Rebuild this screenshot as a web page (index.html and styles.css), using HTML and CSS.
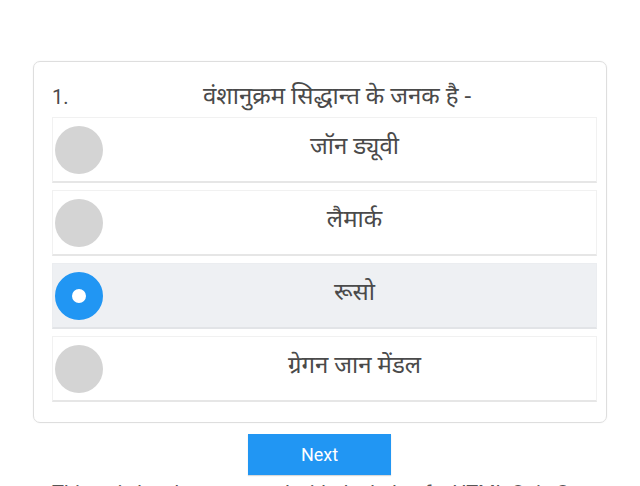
FILE: index.html
```html
<!DOCTYPE html>
<html lang="hi">
<head>
<meta charset="utf-8">
<title>Quiz</title>
<link rel="stylesheet" href="styles.css">
</head>
<body>
<div class="card">
  <div class="question">
    <span class="qnum">1.</span>
    <span class="qtext">वंशानुक्रम सिद्धान्त के जनक है -</span>
  </div>
  <div class="options">
    <label class="option">
      <span class="radio"></span>
      <span class="otext">जॉन ड्यूवी</span>
    </label>
    <label class="option">
      <span class="radio"></span>
      <span class="otext">लैमार्क</span>
    </label>
    <label class="option selected">
      <span class="radio checked"></span>
      <span class="otext">रूसो</span>
    </label>
    <label class="option">
      <span class="radio"></span>
      <span class="otext">ग्रेगन जान मेंडल</span>
    </label>
  </div>
</div>
<div class="actions">
  <button class="next">Next</button>
</div>
<p class="footer">This quiz has been created with the help of a HTML Quiz Generator</p>
</body>
</html>
```
FILE: styles.css
```css
html, body {
  margin: 0;
  padding: 0;
  background: #ffffff;
  font-family: Roboto, "Noto Sans", "Liberation Sans", sans-serif;
  color: #444;
  overflow: hidden;
}

.card {
  box-sizing: border-box;
  width: 574px;
  height: 362px;
  margin: 61px 0 0 33px;
  border: 1px solid #dedede;
  border-radius: 7px;
  padding: 0 9px 0 18px;
  box-shadow: 0 0 2px rgba(0,0,0,0.05);
}

.question {
  display: flex;
  align-items: center;
  height: 55px;
  font-size: 20px;
  color: #4a4a4a;
}

.qnum {
  width: 150px;
  padding-top: 14px;
}

.qtext {
  font-size: 24px;
  padding-top: 10px;
  padding-left: 1px;
}

.options {
  display: flex;
  flex-direction: column;
  gap: 7px;
}

.option {
  box-sizing: border-box;
  height: 66px;
  display: flex;
  align-items: center;
  border: 1px solid #f1f1f1;
  border-bottom: 2px solid #e6e6e6;
  background: #ffffff;
}

.option.selected {
  background: #eef0f3;
  border-color: #ebedf0;
  border-bottom-color: #e2e4e7;
}

.radio {
  box-sizing: border-box;
  flex: none;
  width: 48px;
  height: 48px;
  margin-left: 2px;
  border-radius: 50%;
  background: #d4d4d4;
}

.radio.checked {
  background: #ffffff;
  border: 17px solid #2196f3;
}

.otext {
  flex: 1;
  text-align: center;
  font-size: 24px;
  color: #4a4a4a;
  padding-left: 10px;
  padding-bottom: 10px;
}

.actions {
  display: flex;
  justify-content: center;
  margin-top: 11px;
  padding-right: 1px;
}

.next {
  width: 143px;
  height: 41px;
  border: none;
  border-radius: 0;
  background: #2196f3;
  color: #ffffff;
  font-family: Roboto, "Noto Sans", sans-serif;
  font-size: 18px;
  padding: 0;
  box-shadow: 0 1px 1px rgba(0,0,0,0.15);
}

.footer {
  margin: 6px 0 0 52px;
  font-size: 20px;
  color: #555;
  white-space: nowrap;
}
```
